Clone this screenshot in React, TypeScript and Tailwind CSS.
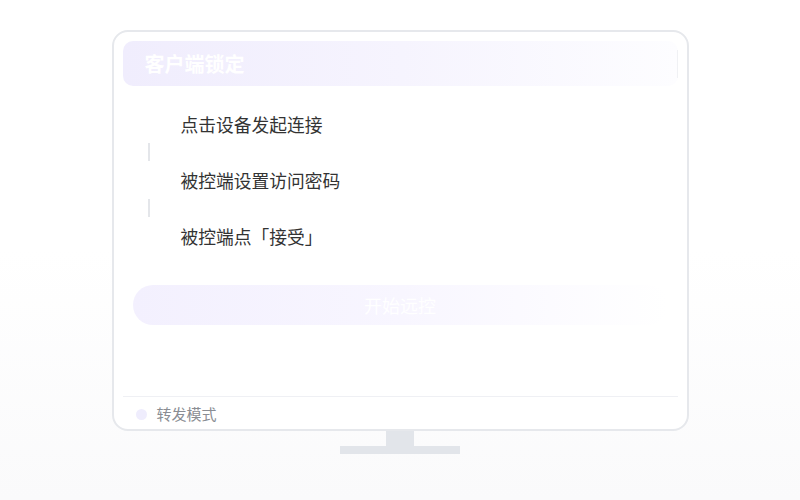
const steps = ['点击设备发起连接', '被控端设置访问密码', '被控端点「接受」']

export default function App() {
  return (
    <div
      className="w-[800px] h-[500px] bg-gradient-to-b from-white via-white to-[#fafafb] flex flex-col items-center pt-[30px]"
      style={{ fontFamily: '"Noto Sans CJK SC", "Noto Sans", sans-serif' }}
    >
      <div className="w-[577px] h-[401px] bg-white border-2 border-[#e6e8ec] rounded-[16px] px-[9px] pt-[9px] flex flex-col">
        <div className="h-[45px] rounded-[10px] bg-gradient-to-r from-[#f0edfd] via-[#f6f4fe] to-[#fdfdff] flex items-center pl-[22px] relative">
          <span className="text-white text-[20px] font-bold">客户端锁定</span>
          <div className="absolute right-0 top-[9px] w-px h-[28px] bg-[#f0f1f4]" />
        </div>

        <div className="flex flex-col pl-[58px] pt-[26px]">
          {steps.map((s, i) => (
            <div key={s}>
              {i > 0 && (
                <div className="h-[32px] flex items-center -ml-[33px]">
                  <div className="w-[2px] h-[18px] bg-[#e4e6ea]" />
                </div>
              )}
              <div className="h-[24px] leading-[24px] text-[17.75px] text-[#333]">{s}</div>
            </div>
          ))}
        </div>

        <div className="mx-[10px] mt-[37px] h-[40px] rounded-full bg-gradient-to-r from-[#f3f0fe] via-[#f8f6ff] to-transparent flex items-center justify-center">
          <span className="text-white text-[18px]">开始远控</span>
        </div>

        <div className="flex-1" />

        <div className="border-t border-[#eff0f4] h-[33px] flex items-center pl-[13px] pt-[2px] gap-[10px]">
          <div className="w-[11px] h-[11px] rounded-full bg-[#efedfd]" />
          <span className="text-[15px] text-[#8a8d93]">转发模式</span>
        </div>
      </div>
      <div className="w-[28px] h-[15px] bg-[#e2e5ea]" />
      <div className="w-[120px] h-[8px] bg-[#e2e5ea]" />
    </div>
  )
}
